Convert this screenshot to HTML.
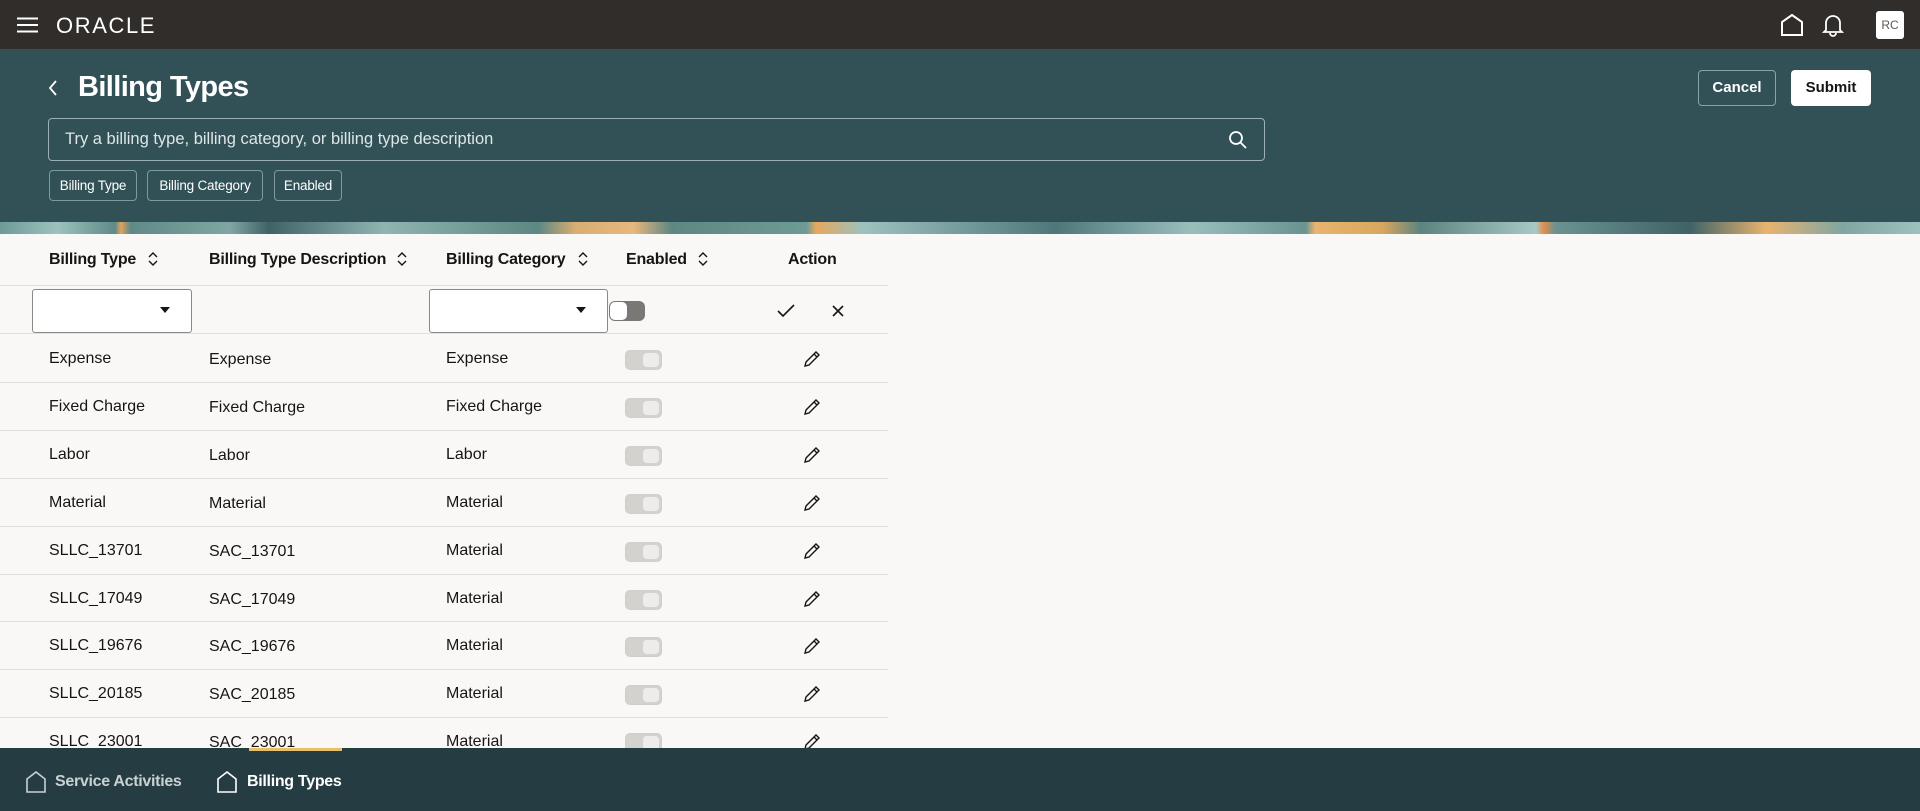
<!DOCTYPE html>
<html><head><meta charset="utf-8"><style>
*{margin:0;padding:0;box-sizing:border-box}
body{width:1920px;height:811px;overflow:hidden;background:#f9f8f6;font-family:"Liberation Sans",sans-serif;position:relative;color:#161513}
.abs{position:absolute;white-space:nowrap}
.top{left:0;top:0;width:1920px;height:49px;background:#312d2a}
.teal{left:0;top:49px;width:1920px;height:173px;background:#325157}
.band{left:0;top:222px;width:1920px;height:12px;background:linear-gradient(90deg,#6e9a96 0,#9cc2bf 3%,#5f8a87 6%,#e2a35c 6.3%,#5f8a87 6.8%,#7fa6a3 12%,#3f6267 14%,#8fb5b2 20%,#5d8783 28%,#d9ae73 30%,#e6b77e 33%,#5d8783 35%,#6e9a96 42%,#e5a85e 42.5%,#9cc2bf 45%,#4f767a 55%,#98bfbc 62%,#6a9390 68%,#e8b46f 68.5%,#d8a75f 72%,#5c8480 74%,#a7c9c6 80%,#e38e4a 80.4%,#6a9390 81%,#3f6267 88%,#e8b46f 92%,#7fa6a3 96%,#9cc2bf 100%)}
.bottom{left:0;top:748px;width:1920px;height:63px;background:#253d42}
.chip{top:170px;height:31px;border:1px solid #7f9a9e;border-radius:4px;color:#fff;font-size:13.5px;line-height:29px;text-align:center;letter-spacing:-0.2px}
.th{top:251px;font-size:16px;font-weight:bold;color:#161513;letter-spacing:-0.2px}
.row{left:0;width:888px;height:1px;background:#e3e1de}
.cell{font-size:16px;color:#161513}
.tog{width:37px;height:20px;border-radius:5px;background:#d4d2cf;border:1px solid #d0cecb}
.tog::after{content:"";position:absolute;right:2px;top:2px;width:16px;height:14px;border-radius:4px;background:#eeecea}
</style></head><body>
<div class="abs top"></div>
<svg class="abs" style="left:17px;top:17px" width="22" height="16"><path d="M0 1.5H21M0 8H21M0 14.5H21" stroke="#fff" stroke-width="2"/></svg>
<div class="abs" style="left:56px;top:13px;color:#fff;font-size:22px;letter-spacing:1.6px">ORACLE</div>
<svg class="abs" style="left:1780px;top:13px" width="24" height="24"><path d="M2 22V9L12 2L22 9V22Z" fill="none" stroke="#fff" stroke-width="2"/></svg>
<svg class="abs" style="left:1822px;top:13px" width="22" height="24"><path d="M4 17V10a7 7 0 0 1 14 0v7l2 2H2z M8 20a3 3 0 0 0 6 0" fill="none" stroke="#fff" stroke-width="1.8"/></svg>
<div class="abs" style="left:1876px;top:11px;width:28px;height:28px;background:#fff;border-radius:3px;color:#5d5b58;font-size:12px;line-height:28px;text-align:center">RC</div>

<div class="abs teal"></div>
<svg class="abs" style="left:47px;top:80px" width="12" height="16"><path d="M9 1L3 8L9 15" fill="none" stroke="#fff" stroke-width="1.8"/></svg>
<div class="abs" style="left:78px;top:71px;color:#fff;font-size:29px;font-weight:bold;letter-spacing:-0.6px">Billing Types</div>
<div class="abs" style="left:1698px;top:70px;width:78px;height:36px;border:1px solid #8aa3a6;border-radius:4px;color:#fff;font-weight:bold;font-size:15px;line-height:34px;text-align:center">Cancel</div>
<div class="abs" style="left:1791px;top:70px;width:80px;height:36px;background:#fff;border-radius:4px;color:#161513;font-weight:bold;font-size:15px;line-height:36px;text-align:center">Submit</div>
<div class="abs" style="left:48px;top:118px;width:1217px;height:43px;border:1px solid #9bb0b3;border-radius:4px"></div>
<div class="abs" style="left:65px;top:130px;color:#dfe6e7;font-size:16.5px">Try a billing type, billing category, or billing type description</div>
<svg class="abs" style="left:1228px;top:130px" width="20" height="20"><circle cx="8" cy="8" r="6" fill="none" stroke="#fff" stroke-width="1.8"/><path d="M12.5 12.5L18 18" stroke="#fff" stroke-width="1.8"/></svg>
<div class="abs chip" style="left:49px;width:88px">Billing Type</div>
<div class="abs chip" style="left:147px;width:116px">Billing Category</div>
<div class="abs chip" style="left:274px;width:68px">Enabled</div>
<div class="abs band"></div>

<div class="abs th" style="left:49px">Billing Type</div>
<div class="abs th" style="left:209px">Billing Type Description</div>
<div class="abs th" style="left:446px">Billing Category</div>
<div class="abs th" style="left:626px">Enabled</div>
<div class="abs th" style="left:788px">Action</div>
<svg class="abs" style="left:148px;top:251px" width="10" height="16"><path d="M1 6L5 2L9 6M1 10L5 14L9 10" fill="none" stroke="#161513" stroke-width="1.4"/></svg>
<svg class="abs" style="left:397px;top:251px" width="10" height="16"><path d="M1 6L5 2L9 6M1 10L5 14L9 10" fill="none" stroke="#161513" stroke-width="1.4"/></svg>
<svg class="abs" style="left:578px;top:251px" width="10" height="16"><path d="M1 6L5 2L9 6M1 10L5 14L9 10" fill="none" stroke="#161513" stroke-width="1.4"/></svg>
<svg class="abs" style="left:698px;top:251px" width="10" height="16"><path d="M1 6L5 2L9 6M1 10L5 14L9 10" fill="none" stroke="#161513" stroke-width="1.4"/></svg>
<div class="abs row" style="top:285px"></div>
<div class="abs" style="left:32px;top:289px;width:160px;height:44px;border:1px solid #8b8985;border-radius:3px;background:#fff"></div>
<svg class="abs" style="left:160px;top:307px" width="10" height="6"><path d="M0 0H10L5 6Z" fill="#161513"/></svg>
<div class="abs" style="left:429px;top:289px;width:179px;height:44px;border:1px solid #8b8985;border-radius:3px;background:#fff"></div>
<svg class="abs" style="left:576px;top:307px" width="10" height="6"><path d="M0 0H10L5 6Z" fill="#161513"/></svg>
<div class="abs" style="left:609px;top:301px;width:36px;height:20px;border-radius:6px;background:#7a7875"><div style="position:absolute;left:1px;top:1px;width:17px;height:18px;border-radius:5px;background:#fff"></div></div>
<svg class="abs" style="left:777px;top:304px" width="18" height="14"><path d="M1 7L6 12L17 1" fill="none" stroke="#161513" stroke-width="1.6"/></svg>
<svg class="abs" style="left:832px;top:305px" width="12" height="12"><path d="M1 1L11 11M11 1L1 11" stroke="#161513" stroke-width="1.6"/></svg>
<div class="abs row" style="top:333px"></div>

<div id="rows"></div>
<script>
var d=[["Expense","Expense","Expense"],["Fixed Charge","Fixed Charge","Fixed Charge"],["Labor","Labor","Labor"],["Material","Material","Material"],["SLLC_13701","SAC_13701","Material"],["SLLC_17049","SAC_17049","Material"],["SLLC_19676","SAC_19676","Material"],["SLLC_20185","SAC_20185","Material"],["SLLC_23001","SAC_23001","Material"]];
var h="";
d.forEach(function(r,i){var t=334+i*47.9;
h+='<div class="abs cell" style="left:49px;top:'+(t+16)+'px">'+r[0]+'</div>';
h+='<div class="abs cell" style="left:209px;top:'+(t+17)+'px">'+r[1]+'</div>';
h+='<div class="abs cell" style="left:446px;top:'+(t+16)+'px">'+r[2]+'</div>';
h+='<div class="abs tog" style="left:625px;top:'+(t+16)+'px"></div>';
h+='<svg class="abs" style="left:803px;top:'+(t+16)+'px" width="18" height="18"><path d="M2 16L3 12L13 2L16 5L6 15Z M11 4L14 7" fill="none" stroke="#161513" stroke-width="1.4"/></svg>';
h+='<div class="abs row" style="top:'+(t+47.9)+'px"></div>';});
document.getElementById("rows").innerHTML=h;
</script>

<div class="abs bottom"></div>
<div class="abs" style="left:249px;top:748px;width:93px;height:3px;background:#e8bf6a"></div>
<svg class="abs" style="left:26px;top:771px" width="20" height="22"><path d="M1 21V8L10 1L19 8V21Z" fill="none" stroke="#c9d1d2" stroke-width="1.6"/></svg>
<div class="abs" style="left:55px;top:773px;color:#c9d1d2;font-size:16px;font-weight:bold;letter-spacing:-0.3px">Service Activities</div>
<svg class="abs" style="left:217px;top:771px" width="20" height="22"><path d="M1 21V8L10 1L19 8V21Z" fill="none" stroke="#fff" stroke-width="1.6"/></svg>
<div class="abs" style="left:247px;top:773px;color:#fff;font-size:16px;font-weight:bold;letter-spacing:-0.3px">Billing Types</div>
</body></html>
